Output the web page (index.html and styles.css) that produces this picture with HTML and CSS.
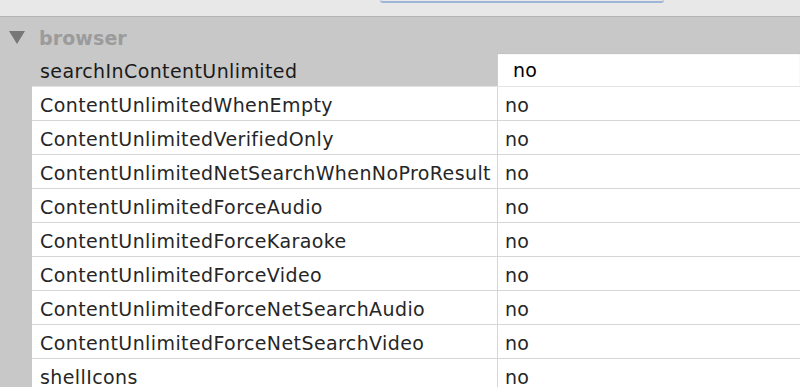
FILE: index.html
```html
<!DOCTYPE html>
<html>
<head>
<meta charset="utf-8">
<link rel="stylesheet" href="styles.css">
</head>
<body>
<div class="topbar"><div class="field"></div></div>
<div class="panel">
  <div class="group-head">
    <svg class="tri" width="16" height="13" viewBox="0 0 16 13"><polygon points="0,0 16,0 8,13" fill="#777"/></svg>
    <span class="group-name">browser</span>
  </div>
  <div class="row row-sel"><div class="key">searchInContentUnlimited</div><div class="val val-edit">no</div></div>
  <div class="row"><div class="key">ContentUnlimitedWhenEmpty</div><div class="val">no</div></div>
  <div class="row"><div class="key">ContentUnlimitedVerifiedOnly</div><div class="val">no</div></div>
  <div class="row"><div class="key">ContentUnlimitedNetSearchWhenNoProResult</div><div class="val">no</div></div>
  <div class="row"><div class="key">ContentUnlimitedForceAudio</div><div class="val">no</div></div>
  <div class="row"><div class="key">ContentUnlimitedForceKaraoke</div><div class="val">no</div></div>
  <div class="row"><div class="key">ContentUnlimitedForceVideo</div><div class="val">no</div></div>
  <div class="row"><div class="key">ContentUnlimitedForceNetSearchAudio</div><div class="val">no</div></div>
  <div class="row"><div class="key">ContentUnlimitedForceNetSearchVideo</div><div class="val">no</div></div>
  <div class="row"><div class="key">shellIcons</div><div class="val">no</div></div>
</div>
</body>
</html>
```
FILE: styles.css
```css
html, body {
  margin: 0;
  padding: 0;
  background: #c8c8c8;
  overflow: hidden;
}
body {
  width: 800px;
  height: 387px;
  font-family: "DejaVu Sans", sans-serif;
  font-size: 19px;
  color: #262626;
}
.topbar {
  height: 16px;
  background: #e8e8e8;
  border-bottom: 1px solid #b4b4b4;
  box-shadow: 0 1px 0 #d2d2d2;
  display: flex;
  padding-left: 380px;
}
.field {
  width: 284px;
  height: 1px;
  border-bottom: 2px solid #9db6d8;
  border-radius: 0 0 3px 3px;
}
.panel {
  background: #c8c8c8;
}
.group-head {
  height: 36px;
  display: flex;
  align-items: center;
  padding-left: 9px;
  box-sizing: border-box;
  padding-top: 6px;
}
.tri {
  display: block;
  margin-right: 14px;
  margin-top: -2px;
}
.group-name {
  font-weight: bold;
  color: #9b9b9b;
  letter-spacing: 0.1px;
}
.row {
  display: grid;
  grid-template-columns: 466px 1fr;
  margin-left: 32px;
  height: 34px;
  box-sizing: border-box;
  border-bottom: 1px solid #d6d6d6;
  background: #fff;
}
.key {
  padding-left: 8px;
  padding-top: 3px;
  display: flex;
  align-items: center;
  border-right: 1px solid #d6d6d6;
  letter-spacing: 0.4px;
  white-space: nowrap;
  overflow: hidden;
}
.val {
  padding-left: 7px;
  padding-top: 3px;
  display: flex;
  align-items: center;
  letter-spacing: 0.3px;
}
.row-sel {
  background: #c8c8c8;
  border-bottom: 1px solid #e4e4e4;
}
.row-sel .key {
  border-right: none;
  color: #1a1a1a;
}
.val-edit {
  background: #fff;
  color: #000;
  padding-left: 16px;
  padding-top: 1px;
  margin-left: -1px;
  box-shadow: inset 0 1px 1px #bdbdbd, inset 1px 0 0 #cfcfcf;
}
```
